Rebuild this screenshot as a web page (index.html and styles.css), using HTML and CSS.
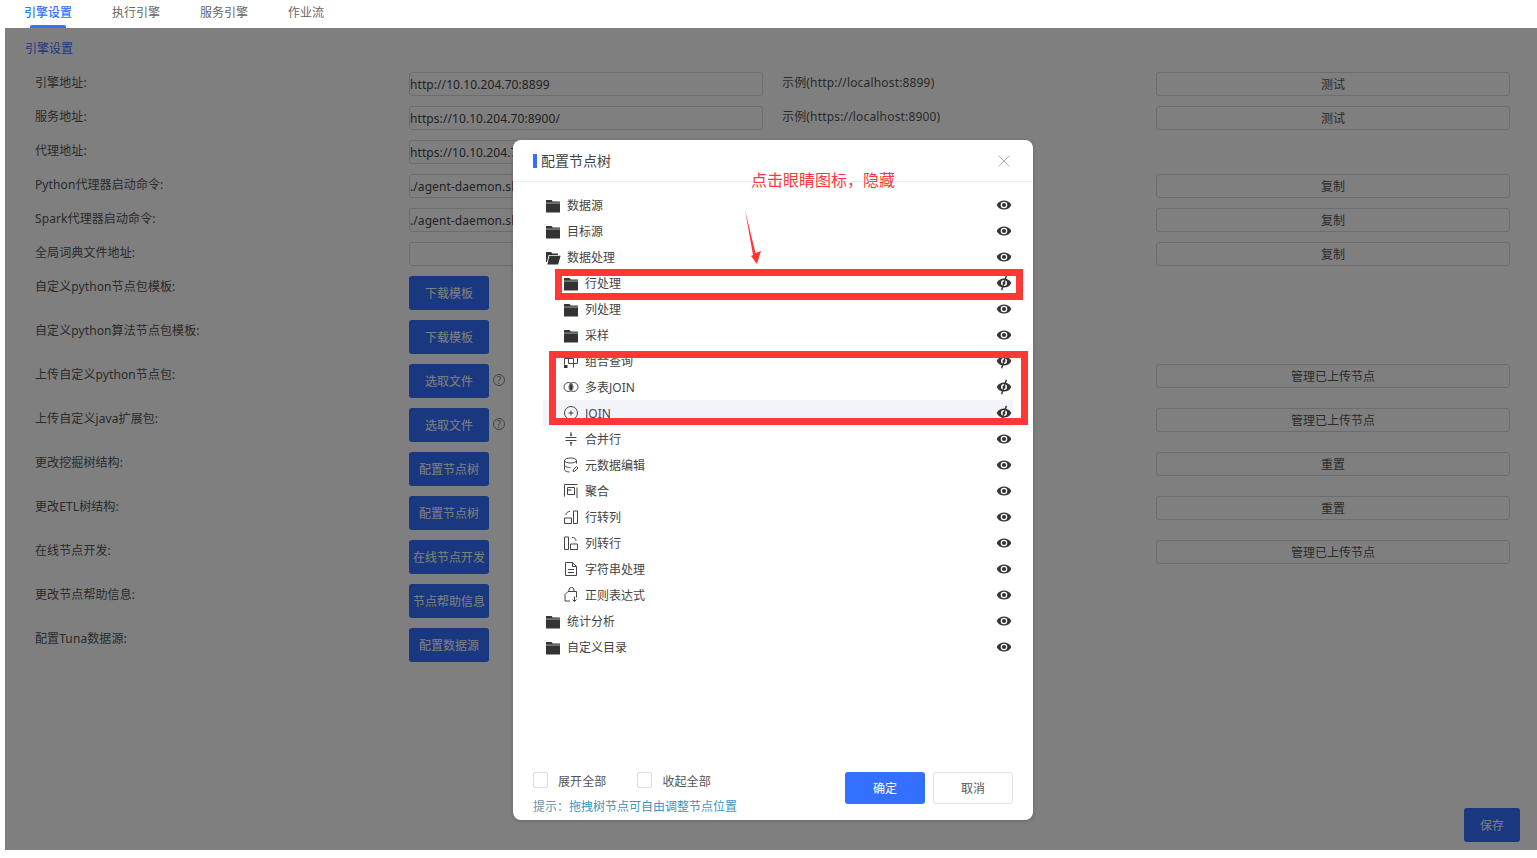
FILE: index.html
```html
<!DOCTYPE html>
<html lang="zh-CN">
<head>
  <meta charset="UTF-8">
  <title>引擎设置</title>
  <link rel="stylesheet" href="styles.css">
</head>
<body>
  <svg class="sprite" xmlns="http://www.w3.org/2000/svg">
    <symbol id="i-folder" viewBox="0 0 16 16"><path d="M1 3h5.500l1.300 1.500H15v1.300H1z"/><path d="M1 6.300h14v9.200H1z"/></symbol>
    <symbol id="i-open" viewBox="0 0 16 16"><path d="M1 3h5l1.300 1.500H13v1.500H3.600L2 13H1z"/><path d="M4.400 6.700H15.600L13.200 15.500H2.400z"/></symbol>
    <symbol id="i-eye" viewBox="0 0 16 16"><path d="M.7 8C3.200 1.900 12.800 1.900 15.300 8 12.800 14.100 3.200 14.100.7 8z"/><circle cx="8" cy="8" r="3.300" fill="#fff"/><circle cx="8" cy="8" r="2.100"/></symbol>
    <symbol id="i-eye-off" viewBox="0 0 16 16"><path d="M.7 8C3.200 1.900 12.800 1.900 15.300 8 12.800 14.100 3.200 14.100.7 8z"/><circle cx="8" cy="8" r="3" fill="#fff"/><circle cx="8" cy="8" r="1.500"/><path d="M10.400 .8L5.600 15.200" stroke="#333" stroke-width="1.400"/></symbol>
    <symbol id="i-combo" viewBox="0 0 16 16"><path class="line" d="M5.500 1.500h9v9h-9zM1.500 5.500h9v9M1.500 5.500v6"/><path d="M1 12h3.500v3H1z"/></symbol>
    <symbol id="i-multi" viewBox="0 0 16 16"><circle class="line" cx="5.500" cy="8" r="4.500"/><circle class="line" cx="10.500" cy="8" r="4.500"/><path d="M8 4.400C9.800 5.800 9.800 10.200 8 11.600 6.200 10.200 6.200 5.800 8 4.400z"/></symbol>
    <symbol id="i-join" viewBox="0 0 16 16"><circle class="line" cx="8" cy="8" r="6.500"/><path class="line" d="M5.500 8h5M8 5.500v5"/></symbol>
    <symbol id="i-merge" viewBox="0 0 16 16"><path class="line" d="M2.500 6.500h11M2.500 9.500h11M8 1v3.500M8 11.500V15"/><path d="M6.500 3.500h3L8 5.500zM6.500 12.500h3L8 10.500z"/></symbol>
    <symbol id="i-meta" viewBox="0 0 16 16"><ellipse class="line" cx="7.500" cy="3.500" rx="6" ry="2.500"/><path class="line" d="M1.500 3.500v9c0 1.400 2.700 2.500 5 2.500M13.500 3.500v3M1.500 8c0 1.400 2.700 2.500 6 2.500"/><path class="line" d="M10 14.500l.5-2 3-3 1.500 1.500-3 3z"/></symbol>
    <symbol id="i-agg" viewBox="0 0 16 16"><path class="line" d="M1.500 13.500v-12h13M4.500 4.500h7v7h-7zM14 4.500v10.500"/><path d="M4.500 6.500h4v1h-4z"/></symbol>
    <symbol id="i-r2c" viewBox="0 0 16 16"><path class="line" d="M1.500 9h7v5.500h-7zM10.500 2h4v12.500h-4zM3 6c0-2.500 2-3.500 4-3.500"/></symbol>
    <symbol id="i-c2r" viewBox="0 0 16 16"><path class="line" d="M1.500 2h4v12.500h-4zM7.500 9h7v5.500h-7zM9 2.500c2.500 0 4 1 4 3.500"/></symbol>
    <symbol id="i-doc" viewBox="0 0 16 16"><path class="line" d="M2.500 1.500h7l4 4v9h-11zM9.500 1.500v4h4M5 8.500h6M5 11.500h6"/></symbol>
    <symbol id="i-regex" viewBox="0 0 16 16"><path class="line" d="M5 4.500h8.500v6M5 4.500L2 7.500v6.500h5M6 4.500V3a2.500 2.500 0 0 1 5 0v1.500M11.500 9.500v5M9.500 12.500l2 2 2-2"/></symbol>
  </svg>

  <nav class="tabs">
    <a class="tab active">引擎设置</a>
    <a class="tab">执行引擎</a>
    <a class="tab">服务引擎</a>
    <a class="tab">作业流</a>
  </nav>

  <main class="content">
    <h3 class="section-title">引擎设置</h3>
    <div class="form">
      <div class="row"><label>引擎地址:</label><input class="text-input" value="http://10.10.204.70:8899" readonly><span class="example">示例(http://localhost:8899)</span><button class="btn-plain">测试</button></div>
      <div class="row"><label>服务地址:</label><input class="text-input" value="https://10.10.204.70:8900/" readonly><span class="example">示例(https://localhost:8900)</span><button class="btn-plain">测试</button></div>
      <div class="row"><label>代理地址:</label><input class="text-input" value="https://10.10.204.70:8901/" readonly></div>
      <div class="row"><label>Python代理器启动命令:</label><input class="text-input" value="./agent-daemon.sh start" readonly><span></span><button class="btn-plain">复制</button></div>
      <div class="row"><label>Spark代理器启动命令:</label><input class="text-input" value="./agent-daemon.sh start" readonly><span></span><button class="btn-plain">复制</button></div>
      <div class="row"><label>全局词典文件地址:</label><input class="text-input" readonly><span></span><button class="btn-plain">复制</button></div>
      <div class="row"><label>自定义python节点包模板:</label><div class="action"><button class="btn-primary">下载模板</button></div></div>
      <div class="row"><label>自定义python算法节点包模板:</label><div class="action"><button class="btn-primary">下载模板</button></div></div>
      <div class="row"><label>上传自定义python节点包:</label><div class="action"><button class="btn-primary">选取文件</button><span class="help">?</span></div><span></span><button class="btn-plain">管理已上传节点</button></div>
      <div class="row"><label>上传自定义java扩展包:</label><div class="action"><button class="btn-primary">选取文件</button><span class="help">?</span></div><span></span><button class="btn-plain">管理已上传节点</button></div>
      <div class="row"><label>更改挖掘树结构:</label><div class="action"><button class="btn-primary">配置节点树</button></div><span></span><button class="btn-plain">重置</button></div>
      <div class="row"><label>更改ETL树结构:</label><div class="action"><button class="btn-primary">配置节点树</button></div><span></span><button class="btn-plain">重置</button></div>
      <div class="row"><label>在线节点开发:</label><div class="action"><button class="btn-primary">在线节点开发</button></div><span></span><button class="btn-plain">管理已上传节点</button></div>
      <div class="row"><label>更改节点帮助信息:</label><div class="action"><button class="btn-primary">节点帮助信息</button></div></div>
      <div class="row"><label>配置Tuna数据源:</label><div class="action"><button class="btn-primary">配置数据源</button></div></div>
    </div>
    <div class="page-footer"><button class="btn-primary btn-save">保存</button></div>

    <div class="mask"></div>

    <section class="modal">
      <header class="modal-header">
        <h4 class="modal-title">配置节点树</h4>
        <svg class="close" viewBox="0 0 12 12"><path d="M.5.500l11 11M11.500.500l-11 11"/></svg>
      </header>

      <div class="tree">
        <div class="node"><svg class="icon"><use href="#i-folder"/></svg><span>数据源</span><svg class="eye"><use href="#i-eye"/></svg></div>
        <div class="node"><svg class="icon"><use href="#i-folder"/></svg><span>目标源</span><svg class="eye"><use href="#i-eye"/></svg></div>
        <div class="node"><svg class="icon"><use href="#i-open"/></svg><span>数据处理</span><svg class="eye"><use href="#i-eye"/></svg></div>
        <div class="node child"><svg class="icon"><use href="#i-folder"/></svg><span>行处理</span><svg class="eye"><use href="#i-eye-off"/></svg></div>
        <div class="node child"><svg class="icon"><use href="#i-folder"/></svg><span>列处理</span><svg class="eye"><use href="#i-eye"/></svg></div>
        <div class="node child"><svg class="icon"><use href="#i-folder"/></svg><span>采样</span><svg class="eye"><use href="#i-eye"/></svg></div>
        <div class="node child"><svg class="icon"><use href="#i-combo"/></svg><span>组合查询</span><svg class="eye"><use href="#i-eye-off"/></svg></div>
        <div class="node child"><svg class="icon"><use href="#i-multi"/></svg><span>多表JOIN</span><svg class="eye"><use href="#i-eye-off"/></svg></div>
        <div class="node child hover"><svg class="icon"><use href="#i-join"/></svg><span>JOIN</span><svg class="eye"><use href="#i-eye-off"/></svg></div>
        <div class="node child"><svg class="icon"><use href="#i-merge"/></svg><span>合并行</span><svg class="eye"><use href="#i-eye"/></svg></div>
        <div class="node child"><svg class="icon"><use href="#i-meta"/></svg><span>元数据编辑</span><svg class="eye"><use href="#i-eye"/></svg></div>
        <div class="node child"><svg class="icon"><use href="#i-agg"/></svg><span>聚合</span><svg class="eye"><use href="#i-eye"/></svg></div>
        <div class="node child"><svg class="icon"><use href="#i-r2c"/></svg><span>行转列</span><svg class="eye"><use href="#i-eye"/></svg></div>
        <div class="node child"><svg class="icon"><use href="#i-c2r"/></svg><span>列转行</span><svg class="eye"><use href="#i-eye"/></svg></div>
        <div class="node child"><svg class="icon"><use href="#i-doc"/></svg><span>字符串处理</span><svg class="eye"><use href="#i-eye"/></svg></div>
        <div class="node child"><svg class="icon"><use href="#i-regex"/></svg><span>正则表达式</span><svg class="eye"><use href="#i-eye"/></svg></div>
        <div class="node"><svg class="icon"><use href="#i-folder"/></svg><span>统计分析</span><svg class="eye"><use href="#i-eye"/></svg></div>
        <div class="node"><svg class="icon"><use href="#i-folder"/></svg><span>自定义目录</span><svg class="eye"><use href="#i-eye"/></svg></div>
      </div>

      <footer class="modal-footer">
        <div>
          <div class="checks">
            <label class="check"><input type="checkbox"><span>展开全部</span></label>
            <label class="check"><input type="checkbox"><span>收起全部</span></label>
          </div>
          <p class="tip">提示：<span>拖拽树节点可自由调整节点位置</span></p>
        </div>
        <div class="modal-actions">
          <button class="btn-ok">确定</button>
          <button class="btn-cancel">取消</button>
        </div>
      </footer>

      <!-- red marks drawn on top of the screenshot -->
      <div class="mark mark-one"></div>
      <div class="mark mark-two"></div>
      <div class="note">点击眼睛图标，隐藏</div>
      <svg class="arrow" viewBox="0 0 18 56"><path d="M0 0L10.500 43 16 41 12 54 6 46 8 45z"/></svg>
    </section>
  </main>
</body>
</html>
```

FILE: styles.css
```css
* {
  box-sizing: border-box;
}
body {
  margin: 0;
  height: 858px;
  overflow: hidden;
  background-color: #fff;
  color: #555;
  font-family: "Noto Sans", "Noto Sans CJK SC", sans-serif;
  font-size: 12px;
}
button, input {
  font-family: inherit;
  font-size: 12px;
}
.sprite {
  display: none;
}

/* Top tabs */
.tabs {
  display: flex;
  gap: 40px;
  height: 28px;
  padding-left: 24px;
}
.tab {
  position: relative;
  line-height: 25px;
  color: #666;
}
.tab.active {
  color: #3370ff;
  font-weight: 500;
}
.tab.active::after {
  content: "";
  position: absolute;
  left: 6px;
  right: 6px;
  bottom: 0;
  height: 3px;
  border-radius: 2px 2px 0 0;
  background-color: #3370ff;
}

/* Settings page */
.content {
  position: relative;
  display: flex;
  flex-direction: column;
  height: 822px;
  margin-left: 5px;
}
.section-title {
  margin: 14px 0 16px 20px;
  font-size: 12px;
  font-weight: 400;
  line-height: 14px;
  color: #3370ff;
}
.form {
  display: flex;
  flex-direction: column;
  gap: 10px;
  padding-left: 30px;
}
.row {
  display: grid;
  grid-template-columns: 374px 373px 374px 354px;
  align-items: start;
}
.row label {
  padding-top: 4px;
  line-height: 14px;
  letter-spacing: 0.1px;
  color: #555;
}
.example {
  padding-top: 4px;
  line-height: 14px;
  letter-spacing: 0.17px;
  color: #555;
}
.text-input {
  width: 354px;
  height: 24px;
  padding: 0;
  border: 1px solid #d9dae6;
  border-radius: 3px;
  letter-spacing: 0.08px;
  color: #444;
  outline: none;
}
.btn-plain {
  height: 24px;
  padding: 0;
  border: 1px solid #d9dae6;
  border-radius: 3px;
  background-color: #fff;
  color: #555;
}
.action {
  display: flex;
  align-items: flex-start;
  gap: 4px;
}
.btn-primary {
  width: 80px;
  height: 34px;
  padding: 0;
  border: none;
  border-radius: 3px;
  background-color: #3370ff;
  color: #fff;
}
.help {
  width: 12px;
  height: 12px;
  margin-top: 10px;
  border: 1px solid #888;
  border-radius: 50%;
  color: #888;
  font-size: 10px;
  line-height: 10px;
  text-align: center;
}
.page-footer {
  display: flex;
  justify-content: flex-end;
  margin-top: auto;
  padding: 0 17px 8px 0;
}
.btn-save {
  width: 56px;
}
.mask {
  position: absolute;
  inset: 0;
  background-color: rgba(0,0,0,0.5);
}

/* Dialog */
.modal {
  position: absolute;
  left: 508px;
  top: 112px;
  display: flex;
  flex-direction: column;
  width: 520px;
  height: 680px;
  border-radius: 8px;
  background-color: #fff;
  box-shadow: 0 1px 4px rgba(0,0,0,0.2);
}
.modal-header {
  display: flex;
  justify-content: space-between;
  align-items: center;
  height: 42px;
  padding: 0 23px 0 20px;
  border-bottom: 1px solid #eee;
}
.modal-title {
  margin: 0;
  padding-left: 4px;
  border-left: 4px solid #3370ff;
  font-size: 14px;
  font-weight: 400;
  line-height: 14px;
  color: #444;
}
.close {
  width: 12px;
  height: 12px;
  fill: none;
  stroke: #aaa;
}
.tree {
  flex: 1;
  padding: 10px 20px 0 30px;
}
.node {
  display: flex;
  align-items: center;
  height: 26px;
  padding: 0 0 0 2px;
  color: #444;
}
.node.child {
  padding-left: 20px;
}
.node.hover {
  background-color: #f3f4f9;
}
.icon {
  flex: none;
  width: 16px;
  height: 16px;
  margin-right: 6px;
  fill: #333;
}
.line {
  fill: none;
  stroke: #444;
}
.eye {
  flex: none;
  width: 16px;
  height: 16px;
  margin-left: auto;
  margin-right: 1px;
  fill: #333;
}
.modal-footer {
  display: flex;
  justify-content: space-between;
  align-items: flex-start;
  height: 48px;
  padding: 0 20px;
}
.checks {
  display: flex;
  gap: 31px;
}
.check {
  display: flex;
  align-items: center;
  gap: 10px;
  height: 16px;
  color: #555;
}
.check span {
  padding-top: 2px;
  letter-spacing: 0.1px;
}
.check input {
  appearance: none;
  width: 15px;
  height: 16px;
  margin: 0;
  border: 1px solid #d8dbe8;
  border-radius: 2px;
}
.tip {
  margin: 12px 0 0;
  line-height: 14px;
  color: #6d93ab;
}
.tip span {
  color: #3b94c4;
}
.modal-actions {
  display: flex;
  gap: 8px;
}
.btn-ok,
.btn-cancel {
  width: 80px;
  height: 32px;
  padding: 0;
  border-radius: 3px;
}
.btn-ok {
  border: none;
  background-color: #3370ff;
  color: #fff;
}
.btn-cancel {
  border: 1px solid #dfe1ec;
  background-color: #fff;
  color: #555;
}

/* Red annotations over the dialog */
.mark {
  position: absolute;
  border: 7px solid #ff3737;
}
.mark-one {
  left: 42px;
  top: 129px;
  width: 468px;
  height: 31px;
}
.mark-two {
  left: 36px;
  top: 211px;
  width: 479px;
  height: 74px;
}
.note {
  position: absolute;
  left: 238px;
  top: 29px;
  font-size: 16px;
  line-height: 22px;
  color: #ff3737;
}
.arrow {
  position: absolute;
  left: 232px;
  top: 70px;
  width: 18px;
  height: 56px;
  fill: #ff3737;
}
```
